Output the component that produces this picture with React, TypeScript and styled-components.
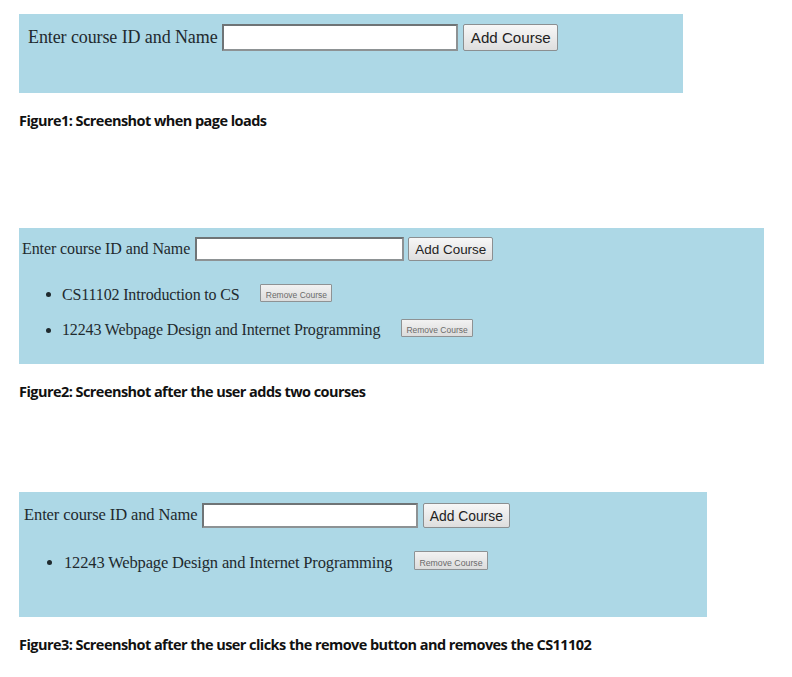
import styled, { createGlobalStyle } from 'styled-components';

// Estilo global da página
const GlobalStyle = createGlobalStyle`
    body {
        margin: 0;
        background: #ffffff;
        font-family: "Liberation Serif", "Times New Roman", serif;
    }
`;

const Page = styled.div`
    display: flex;
    flex-direction: column;
    padding-left: 19px;
`;

const Figure = styled.section<{ $offset: number }>`
    display: flex;
    flex-direction: column;
    align-items: flex-start;
    margin-top: ${p => p.$offset}px;
`;

const Panel = styled.div<{ $width: number; $height: number; $inset: number; $size: number; $top: number }>`
    box-sizing: border-box;
    width: ${p => p.$width}px;
    height: ${p => p.$height}px;
    padding: ${p => p.$top}px 0 0 ${p => p.$inset}px;
    background-color: #add8e6;
    font-size: ${p => p.$size}px;
    color: #1f2a2e;
`;

const FormRow = styled.div`
    display: flex;
    align-items: center;
    gap: 0.27em;
`;

const Label = styled.label`
    white-space: nowrap;
    letter-spacing: -0.1px;
`;

const TextInput = styled.input`
    box-sizing: border-box;
    width: 13.1em;
    height: 1.5em;
    margin: 0;
    border: 2px solid #6f7476;
    border-right-color: #8d9294;
    border-bottom-color: #8d9294;
    background: #ffffff;
    font-size: inherit;
`;

const AddButton = styled.button`
    box-sizing: border-box;
    width: 5.3em;
    height: 1.5em;
    margin: 0;
    padding: 0;
    border: 1px solid #8b8f91;
    border-radius: 2px;
    background: linear-gradient(#f7f7f7, #dedede);
    color: #222;
    font-family: "Liberation Sans", Arial, sans-serif;
    font-size: inherit;

    span {
        font-size: 0.84em;
    }
`;

const CourseList = styled.ul`
    margin: 1.42em 0 0;
    padding-left: 40px;
`;

const CourseItem = styled.li`
    height: 2.2em;
    line-height: 1.2em;
    white-space: nowrap;
    letter-spacing: -0.15px;
`;

const RemoveButton = styled.button`
    box-sizing: border-box;
    width: 4.5em;
    height: 1.12em;
    margin: 0 0 0 1.3em;
    padding: 0;
    vertical-align: 0.1em;
    border: 1px solid #8e9294;
    border-radius: 1px;
    background: linear-gradient(#f2f2f2, #dcdcdc);
    color: #6a6a6a;
    font-family: "Liberation Sans", Arial, sans-serif;
    font-size: inherit;
    letter-spacing: 0;
    line-height: 1;

    span {
        font-size: 0.53em;
    }
`;

const Caption = styled.p`
    margin: 18px 0 0;
    font-family: "Open Sans", "Noto Sans", sans-serif;
    font-weight: 700;
    font-size: 14.5px;
    line-height: 20px;
    letter-spacing: -0.55px;
    color: #111;
`;

type figureData = {
    offset: number,
    width: number,
    height: number,
    inset: number,
    top: number,
    size: number,
    courses: string[],
    caption: string,
}

const figures: figureData[] = [
    {
        offset: 14, width: 664, height: 79, inset: 9, top: 10, size: 18,
        courses: [],
        caption: 'Figure1: Screenshot when page loads',
    },
    {
        offset: 97, width: 745, height: 136, inset: 3, top: 9, size: 16,
        courses: ['CS11102 Introduction to CS', '12243 Webpage Design and Internet Programming'],
        caption: 'Figure2: Screenshot after the user adds two courses',
    },
    {
        offset: 90, width: 688, height: 125, inset: 5, top: 11, size: 16.5,
        courses: ['12243 Webpage Design and Internet Programming'],
        caption: 'Figure3: Screenshot after the user clicks the remove button and removes the CS11102',
    },
];

export default function App() {
    return (
        <>
            <GlobalStyle />
            <Page>
                {figures.map((fig, i) => (
                    <Figure key={i} $offset={fig.offset}>
                        <Panel $width={fig.width} $height={fig.height} $inset={fig.inset} $top={fig.top} $size={fig.size}>
                            <FormRow>
                                <Label>Enter course ID and Name</Label>
                                <TextInput type="text" />
                                <AddButton><span>Add Course</span></AddButton>
                            </FormRow>
                            {fig.courses.length > 0 && (
                                <CourseList>
                                    {fig.courses.map(course => (
                                        <CourseItem key={course}>
                                            {course}
                                            <RemoveButton><span>Remove Course</span></RemoveButton>
                                        </CourseItem>
                                    ))}
                                </CourseList>
                            )}
                        </Panel>
                        <Caption>{fig.caption}</Caption>
                    </Figure>
                ))}
            </Page>
        </>
    );
}
